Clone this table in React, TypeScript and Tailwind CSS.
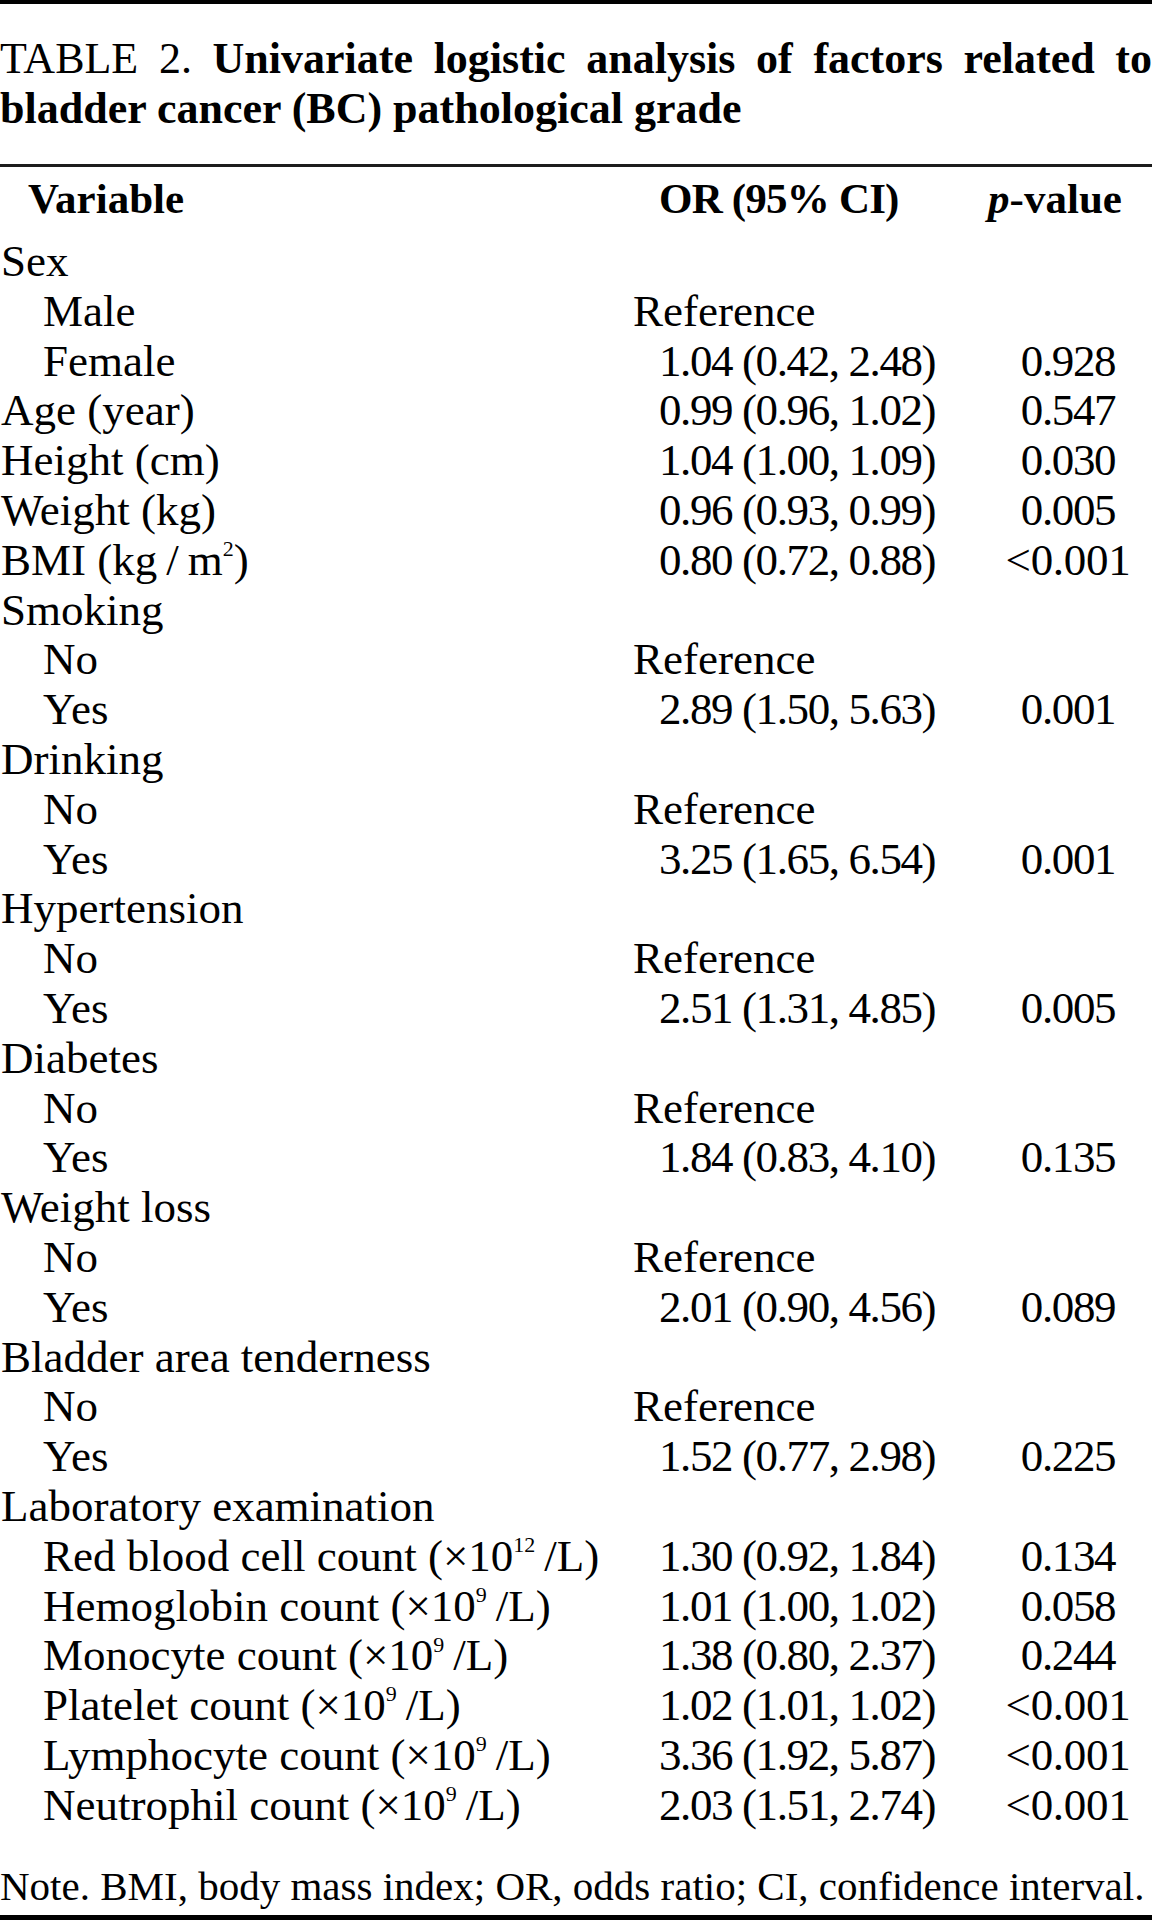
import type { ReactNode } from "react";

type Row = {
  label: ReactNode;
  sub?: boolean;
  or?: string;
  p?: string;
};

const REF = "Reference";

function Unit({ exp }: { exp: string }) {
  return (
    <>
      (×10<sup className="text-[22px] top-[-0.85em]">{exp}</sup>{"\u2009"}/L)
    </>
  );
}

const rows: Row[] = [
  { label: "Sex" },
  { label: "Male", sub: true, or: REF },
  { label: "Female", sub: true, or: "1.04 (0.42, 2.48)", p: "0.928" },
  { label: "Age (year)", or: "0.99 (0.96, 1.02)", p: "0.547" },
  { label: "Height (cm)", or: "1.04 (1.00, 1.09)", p: "0.030" },
  { label: "Weight (kg)", or: "0.96 (0.93, 0.99)", p: "0.005" },
  {
    label: (
      <>
        BMI (kg{"\u2009"}/{"\u2009"}m<sup className="text-[22px] top-[-0.85em]">2</sup>)
      </>
    ),
    or: "0.80 (0.72, 0.88)",
    p: "<0.001",
  },
  { label: "Smoking" },
  { label: "No", sub: true, or: REF },
  { label: "Yes", sub: true, or: "2.89 (1.50, 5.63)", p: "0.001" },
  { label: "Drinking" },
  { label: "No", sub: true, or: REF },
  { label: "Yes", sub: true, or: "3.25 (1.65, 6.54)", p: "0.001" },
  { label: "Hypertension" },
  { label: "No", sub: true, or: REF },
  { label: "Yes", sub: true, or: "2.51 (1.31, 4.85)", p: "0.005" },
  { label: "Diabetes" },
  { label: "No", sub: true, or: REF },
  { label: "Yes", sub: true, or: "1.84 (0.83, 4.10)", p: "0.135" },
  { label: "Weight loss" },
  { label: "No", sub: true, or: REF },
  { label: "Yes", sub: true, or: "2.01 (0.90, 4.56)", p: "0.089" },
  { label: "Bladder area tenderness" },
  { label: "No", sub: true, or: REF },
  { label: "Yes", sub: true, or: "1.52 (0.77, 2.98)", p: "0.225" },
  { label: "Laboratory examination" },
  { label: <>Red blood cell count <Unit exp="12" /></>, sub: true, or: "1.30 (0.92, 1.84)", p: "0.134" },
  { label: <>Hemoglobin count <Unit exp="9" /></>, sub: true, or: "1.01 (1.00, 1.02)", p: "0.058" },
  { label: <>Monocyte count <Unit exp="9" /></>, sub: true, or: "1.38 (0.80, 2.37)", p: "0.244" },
  { label: <>Platelet count <Unit exp="9" /></>, sub: true, or: "1.02 (1.01, 1.02)", p: "<0.001" },
  { label: <>Lymphocyte count <Unit exp="9" /></>, sub: true, or: "3.36 (1.92, 5.87)", p: "<0.001" },
  { label: <>Neutrophil count <Unit exp="9" /></>, sub: true, or: "2.03 (1.51, 2.74)", p: "<0.001" },
];

function TableRow({ row }: { row: Row }) {
  const isRef = row.or === REF;
  const isLess = row.p?.startsWith("<");
  return (
    <div className="flex h-[49.8px] items-start whitespace-nowrap">
      <div className={`w-[633px] ${row.sub ? "pl-[43px]" : "pl-[1px]"}`}>{row.label}</div>
      <div className={`w-[335px] ${isRef ? "" : "pl-[26px] tracking-[-1.4px]"}`}>{row.or}</div>
      <div className={`w-[184px] pl-[16px] text-center ${isLess ? "tracking-[-0.3px]" : "tracking-[-1.4px]"}`}>
        {row.p}
      </div>
    </div>
  );
}

export default function App() {
  return (
    <div className="w-[1152px] bg-white text-black font-['Liberation_Serif',serif]">
      <div className="h-[4px] bg-black" />

      {/* caption */}
      <div className="mt-[30px] text-[44px] leading-[50px]">
        <p className="text-justify [text-align-last:justify] whitespace-nowrap">
          TABLE 2. <b>Univariate logistic analysis of factors related to</b>
        </p>
        <p>
          <b>bladder cancer (BC) pathological grade</b>
        </p>
      </div>

      <div className="mt-[30px] h-[3px] bg-[#1c1c1c]" />

      {/* header */}
      <div className="mt-[7px] flex h-[50px] text-[43px] font-bold leading-[50px] whitespace-nowrap">
        <div className="w-[633px] pl-[28px]">Variable</div>
        <div className="w-[335px] pl-[26px] tracking-[-0.8px]">OR (95% CI)</div>
        <div className="w-[184px] pl-[14px] pr-[24px] text-center">
          <i>p</i>-value
        </div>
      </div>

      {/* body */}
      <div className="mt-[13px] text-[45px] leading-[49.8px]">
        {rows.map((row, i) => (
          <TableRow key={i} row={row} />
        ))}
      </div>

      <p className="mt-[35px] text-[41px] leading-[40px] whitespace-nowrap">
        Note. BMI, body mass index; OR, odds ratio; CI, confidence interval.
      </p>

      <div className="mt-[9px] h-[5px] bg-black" />
    </div>
  );
}
